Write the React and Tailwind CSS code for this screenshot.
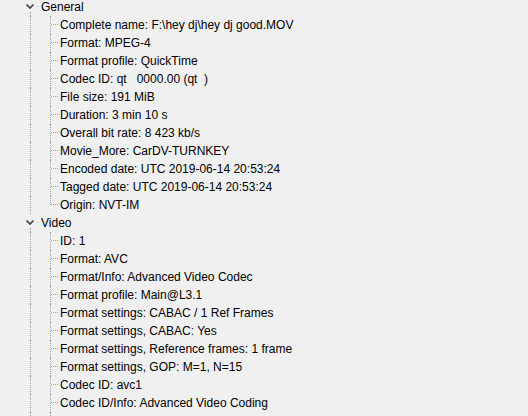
import React from "react";

const sections = [
  {
    title: "General",
    items: [
      "Complete name: F:\\hey dj\\hey dj good.MOV",
      "Format: MPEG-4",
      "Format profile: QuickTime",
      "Codec ID: qt\u00a0\u00a0 0000.00 (qt\u00a0 )",
      "File size: 191 MiB",
      "Duration: 3 min 10 s",
      "Overall bit rate: 8 423 kb/s",
      "Movie_More: CarDV-TURNKEY",
      "Encoded date: UTC 2019-06-14 20:53:24",
      "Tagged date: UTC 2019-06-14 20:53:24",
      "Origin: NVT-IM",
    ],
  },
  {
    title: "Video",
    items: [
      "ID: 1",
      "Format: AVC",
      "Format/Info: Advanced Video Codec",
      "Format profile: Main@L3.1",
      "Format settings: CABAC / 1 Ref Frames",
      "Format settings, CABAC: Yes",
      "Format settings, Reference frames: 1 frame",
      "Format settings, GOP: M=1, N=15",
      "Codec ID: avc1",
      "Codec ID/Info: Advanced Video Coding",
    ],
    more: true,
  },
];

const dots = "border-dotted border-[#a0a0a0]";

const Chevron = () => (
  <svg width="10" height="7" viewBox="0 0 10 7" className="shrink-0">
    <path d="M1.5 1.5 L5 5 L8.5 1.5" fill="none" stroke="#404040" strokeWidth="1.7" />
  </svg>
);

// vertical guide for an ancestor level
const Guide = () => (
  <div className="flex h-full w-[20px] shrink-0 pl-[10px]">
    <div className={`h-full border-l ${dots}`} />
  </div>
);

const SectionRow = ({ title }) => (
  <div className="flex h-[18px]">
    <div className="w-[20px] shrink-0" />
    <div className="flex h-full w-[20px] shrink-0 flex-col pl-[5px] pt-[5px]">
      <div className="flex items-center gap-[2px]">
        <Chevron />
        <div className="h-[1px] w-[1px] bg-[#a0a0a0]" />
      </div>
      <div className={`ml-[5px] mt-[2px] flex-1 border-l ${dots}`} />
    </div>
    <span className="flex items-center pl-[1px]">{title}</span>
  </div>
);

const ItemRow = ({ text, last }) => (
  <div className="flex h-[18px]">
    <div className="w-[20px] shrink-0" />
    <Guide />
    <div className="flex h-full w-[20px] shrink-0 pl-[10px]">
      <div className={`border-l ${dots} ${last ? "h-[9px]" : "h-full"}`} />
      <div className={`mt-[8px] h-0 w-[7px] border-t ${dots}`} />
    </div>
    <span className="flex items-center">{text}</span>
  </div>
);

export default function App() {
  return (
    <div
      className="h-[416px] w-[528px] overflow-hidden bg-[#f0f0f0] text-[12px] text-black"
      style={{ fontFamily: '"Liberation Sans", Arial, sans-serif' }}
    >
      <div className="-mt-[2px] flex flex-col">
        {sections.map((section) => (
          <div key={section.title} className="flex flex-col">
            <SectionRow title={section.title} />
            {section.items.map((item, j) => (
              <ItemRow
                key={j}
                text={item}
                last={!section.more && j === section.items.length - 1}
              />
            ))}
          </div>
        ))}
        <div className="flex h-[18px]">
          <div className="w-[20px] shrink-0" />
          <Guide />
          <Guide />
        </div>
      </div>
    </div>
  );
}
